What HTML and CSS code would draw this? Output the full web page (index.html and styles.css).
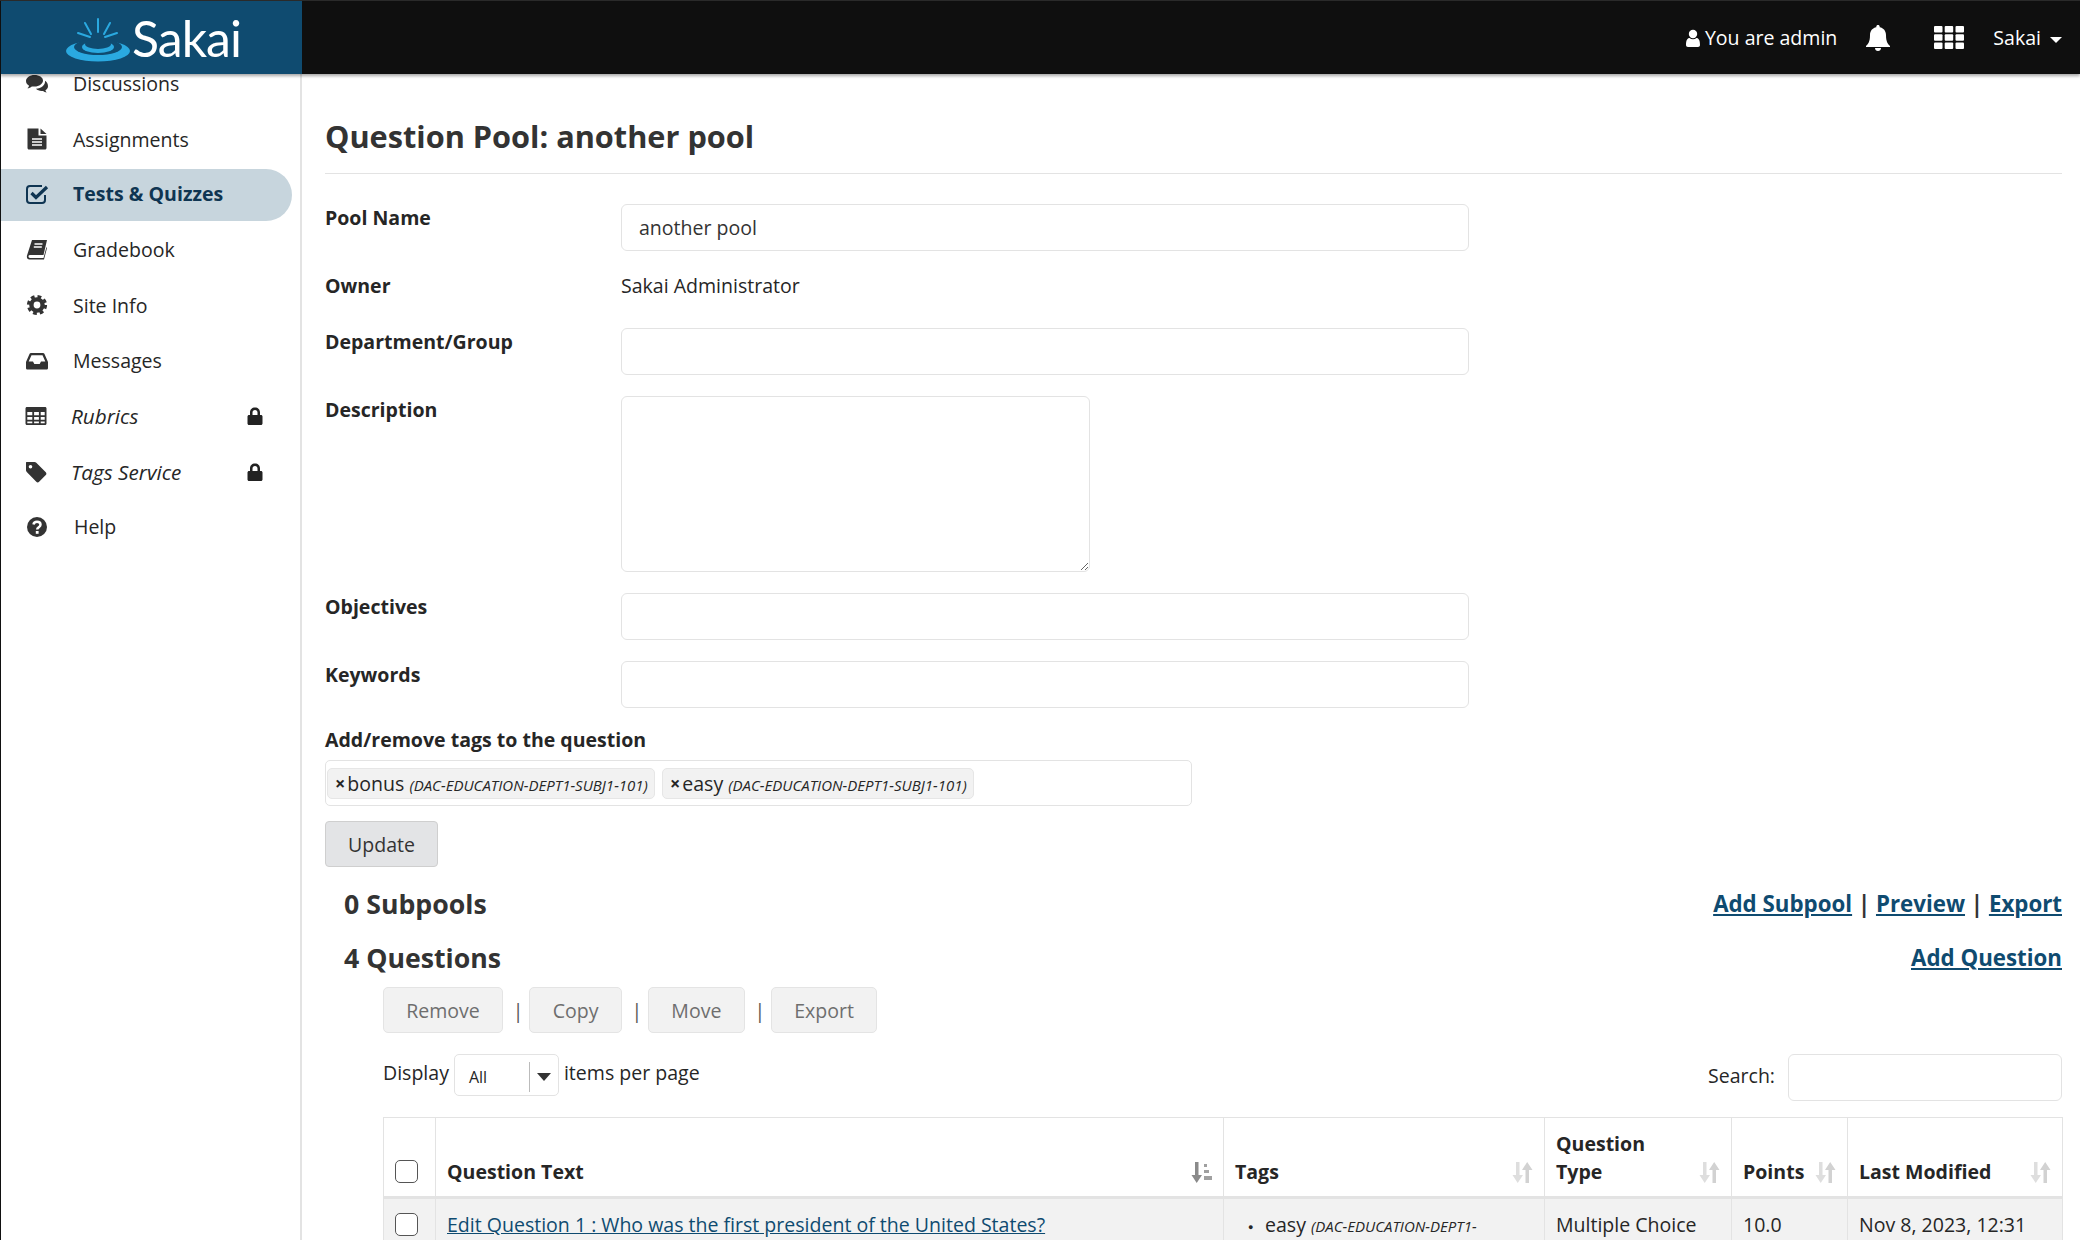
FILE: index.html
```html
<!DOCTYPE html>
<html lang="en">
<head>
  <meta charset="UTF-8" />
  <title>Question Pool: another pool</title>
  <link rel="stylesheet" href="styles.css">
</head>
<body>
  <header class="topbar">
    <a class="logo">
      <svg class="logo-mark" viewBox="0 0 66 44" width="66" height="44">
        <g stroke="#2aa9e0" stroke-width="2" stroke-linecap="round">
          <path d="M32 1v13"/><path d="M19 5l6 11"/><path d="M44 5l-6 11"/><path d="M12 15l12 4"/><path d="M51 15l-12 4"/>
        </g>
        <ellipse cx="32" cy="33" rx="32" ry="10.500" fill="#2aa9e0"/>
        <ellipse cx="32" cy="29" rx="24" ry="8" fill="#0f4b70"/>
        <ellipse cx="32" cy="29" rx="16" ry="6" fill="#2aa9e0"/>
        <ellipse cx="32" cy="26" rx="13" ry="5" fill="#0f4b70"/>
      </svg>
      <span class="logo-text">Sakai</span>
    </a>
    <div class="topbar-right">
      <span class="user">
        <svg viewBox="0 0 14 18" width="14" height="18"><circle cx="7" cy="5" r="4.200" fill="#fff"/><path d="M0 16c0-5 1.500-7 3.500-7 1 .8 2.200 1.200 3.500 1.200S9.500 9.800 10.500 9c2 0 3.500 2 3.500 7 0 1-.8 2-2 2H2c-1.200 0-2-1-2-2z" fill="#fff"/></svg>
        You are admin
      </span>
      <svg class="bell" viewBox="0 0 24 26" width="24" height="26"><path d="M12 0c1 0 1.700.7 1.700 1.700v.6C17.500 3 20 6 20 10c0 7 2 9 4 11v1H0v-1c2-2 4-4 4-11 0-4 2.500-7 6.300-7.700v-.6C10.300.7 11 0 12 0zM9 23h6c0 1.700-1.300 3-3 3s-3-1.300-3-3z" fill="#fff"/></svg>
      <svg class="apps" viewBox="0 0 30 23" width="30" height="23" fill="#fff">
        <rect width="8.500" height="6.500" rx="1"/><rect x="10.700" width="8.500" height="6.500" rx="1"/><rect x="21.500" width="8.500" height="6.500" rx="1"/>
        <rect y="8.200" width="8.500" height="6.500" rx="1"/><rect x="10.700" y="8.200" width="8.500" height="6.500" rx="1"/><rect x="21.500" y="8.200" width="8.500" height="6.500" rx="1"/>
        <rect y="16.500" width="8.500" height="6.500" rx="1"/><rect x="10.700" y="16.500" width="8.500" height="6.500" rx="1"/><rect x="21.500" y="16.500" width="8.500" height="6.500" rx="1"/>
      </svg>
      <span class="site-menu">Sakai <i class="caret"></i></span>
    </div>
  </header>

  <div class="page">
    <nav class="sidebar">
      <ul class="tools">
        <li class="tool">
          <svg viewBox="0 0 24 24"><path d="M9.500 3C4.800 3 1 5.700 1 9c0 1.900 1.200 3.600 3.100 4.700-.3 1-.9 1.900-1.700 2.600 1.700-.2 3.200-.9 4.400-1.900.8.200 1.700.2 2.700.2 4.700 0 8.500-2.700 8.500-6S14.200 3 9.500 3z"/><path d="M20 8.800c.6 4.200-3.700 7.700-9 8 1.300 1.300 3.300 2.200 5.500 2.200.5 0 1 0 1.500-.1 1 .9 2.200 1.500 3.700 1.700-.6-.6-1.100-1.400-1.300-2.300 1.600-1 2.600-2.500 2.600-4.100 0-2.300-1.100-4.200-3-5.400z"/></svg>
          <span>Discussions</span>
        </li>
        <li class="tool">
          <svg viewBox="0 0 24 24"><path d="M2.500 1.500h11v7h8V21c0 .8-.6 1.500-1.500 1.500H4c-.8 0-1.500-.7-1.500-1.500z"/><path d="M15.500 1.500l6 5.500h-6z"/><path d="M7 12h10M7 15h10M7 18h10" stroke="#fff" stroke-width="1.300"/></svg>
          <span>Assignments</span>
        </li>
        <li class="tool tool-active">
          <svg viewBox="0 0 24 24"><path d="M20 13v5c0 1.700-1.300 3-3 3H5c-1.700 0-3-1.300-3-3V7c0-1.700 1.300-3 3-3h12" fill="none" stroke="currentColor" stroke-width="2"/><path d="M6.500 11l4.500 4.500L22 5" fill="none" stroke="currentColor" stroke-width="3.200"/></svg>
          <span>Tests &amp; Quizzes</span>
        </li>
        <li class="tool">
          <svg viewBox="0 0 24 24"><path d="M7 2h15l-3.500 15H5c-1.300 0-1.500 1-1.500 1.500S4 20 5 20h13.500l3-11 .5 1-3 11.500H4.500C2.500 21.500 1.500 20 2 17.500z"/><path d="M9.500 6h8M8.800 9h8" stroke="#fff" stroke-width="1.300"/></svg>
          <span>Gradebook</span>
        </li>
        <li class="tool">
          <svg viewBox="0 0 24 24"><circle cx="12" cy="12" r="5.600" fill="none" stroke="currentColor" stroke-width="4.400"/><circle cx="12" cy="12" r="8.600" fill="none" stroke="currentColor" stroke-width="3" stroke-dasharray="3.800 3"/></svg>
          <span>Site Info</span>
        </li>
        <li class="tool">
          <svg viewBox="0 0 24 24"><path fill-rule="evenodd" d="M6 4h12c.6 0 1.100.3 1.400.8L23 13v6c0 1-.8 1.500-1.500 1.500h-19C1.800 20.500 1 20 1 19v-6l3.600-8.200C4.900 4.300 5.400 4 6 4zm.5 2.200L3.700 12.500H8l1.300 2.500h5.400l1.300-2.500h4.300l-2.800-6.300z"/></svg>
          <span>Messages</span>
        </li>
        <li class="tool tool-locked">
          <svg viewBox="0 0 24 24"><path fill-rule="evenodd" d="M3 3h18c1 0 1.500.7 1.500 1.500v15c0 .8-.5 1.500-1.500 1.500H3c-1 0-1.500-.7-1.500-1.500v-15C1.500 3.700 2 3 3 3zm.3 5v3.200h5V8zm6.800 0v3.200h4.800V8zm6.600 0v3.200h4V8zM3.300 13v2.700h5V13zm6.800 0v2.700h4.800V13zm6.600 0v2.700h4V13zM3.300 17.500v1.700h5v-1.700zm6.800 0v1.700h4.800v-1.700zm6.600 0v1.700h4v-1.700z"/></svg>
          <span>Rubrics</span>
          <svg class="lock" viewBox="0 0 16 18"><path fill-rule="evenodd" d="M3 8V5.500C3 2.500 5 .5 8 .5s5 2 5 5V8h1c.8 0 1.500.6 1.500 1.500v7c0 .8-.7 1.500-1.500 1.500H2c-.8 0-1.500-.7-1.500-1.500v-7C.5 8.600 1.200 8 2 8zm2.500 0h5V5.500C10.500 4 9.500 3 8 3S5.500 4 5.500 5.500z"/></svg>
        </li>
        <li class="tool tool-locked">
          <svg viewBox="0 0 24 24"><path fill-rule="evenodd" d="M2.500 2h8c.7 0 1.300.3 1.800.8l9.500 9.500c.8.800.8 2 0 2.800l-6.700 6.700c-.8.800-2 .8-2.800 0L3 12.300c-.5-.5-1-1.300-1-2V2.500c0-.3.200-.5.500-.5zM6.500 5A1.800 1.800 0 1 0 6.500 8.600 1.800 1.800 0 0 0 6.500 5z"/></svg>
          <span>Tags Service</span>
          <svg class="lock" viewBox="0 0 16 18"><path fill-rule="evenodd" d="M3 8V5.500C3 2.500 5 .5 8 .5s5 2 5 5V8h1c.8 0 1.500.6 1.500 1.500v7c0 .8-.7 1.500-1.500 1.500H2c-.8 0-1.500-.7-1.500-1.500v-7C.5 8.600 1.200 8 2 8zm2.500 0h5V5.500C10.500 4 9.500 3 8 3S5.500 4 5.500 5.500z"/></svg>
        </li>
        <li class="tool tool-help">
          <svg viewBox="0 0 24 24"><circle cx="12" cy="12" r="10"/><path d="M8.500 9.500C8.800 7.700 10.200 6.800 12 6.800c2 0 3.500 1.200 3.500 2.900 0 2.500-3.300 2.600-3.300 4.800" fill="none" stroke="#fff" stroke-width="2.500"/><rect x="10.800" y="16" width="2.800" height="2.800" fill="#fff"/></svg>
          <span>Help</span>
        </li>
      </ul>
    </nav>

    <main class="content">
      <h1 class="page-title">Question Pool: another pool</h1>

      <form class="pool-form">
        <div class="form-row">
          <label>Pool Name</label>
          <input class="field" type="text" value="another pool">
        </div>
        <div class="form-row form-row-static">
          <label>Owner</label>
          <span>Sakai Administrator</span>
        </div>
        <div class="form-row">
          <label>Department/Group</label>
          <input class="field" type="text">
        </div>
        <div class="form-row">
          <label>Description</label>
          <textarea class="field field-area"></textarea>
        </div>
        <div class="form-row">
          <label>Objectives</label>
          <input class="field" type="text">
        </div>
        <div class="form-row">
          <label>Keywords</label>
          <input class="field" type="text">
        </div>
        <div class="tags-label">Add/remove tags to the question</div>
        <div class="tag-box">
          <span class="tag"><b>×</b> bonus <em>(DAC-EDUCATION-DEPT1-SUBJ1-101)</em></span>
          <span class="tag"><b>×</b> easy <em>(DAC-EDUCATION-DEPT1-SUBJ1-101)</em></span>
        </div>
        <button class="btn-update" type="button">Update</button>
      </form>

      <section class="section-head section-subpools">
        <h2>0 Subpools</h2>
        <div class="section-links"><a>Add Subpool</a> | <a>Preview</a> | <a>Export</a></div>
      </section>
      <section class="section-head section-questions">
        <h2>4 Questions</h2>
        <div class="section-links"><a>Add Question</a></div>
      </section>

      <div class="questions">
        <div class="actions">
          <button class="btn-action" type="button">Remove</button><span class="pipe">|</span>
          <button class="btn-action" type="button">Copy</button><span class="pipe">|</span>
          <button class="btn-action" type="button">Move</button><span class="pipe">|</span>
          <button class="btn-action" type="button">Export</button>
        </div>

        <div class="table-tools">
          <div class="per-page">
            <span class="per-page-text">Display</span>
            <div class="select-box"><span class="select-value">All</span><span class="select-arrow"><i class="caret caret-dark"></i></span></div>
            <span class="per-page-text">items per page</span>
          </div>
          <div class="search">
            <label>Search:</label>
            <input class="field search-field" type="text">
          </div>
        </div>

        <table class="question-table">
          <thead>
            <tr>
              <th class="col-check"><input class="check" type="checkbox"></th>
              <th class="col-text"><div class="th-inner"><span>Question Text</span>
                <svg class="sort" viewBox="0 0 21 21" width="21" height="21"><path d="M4 0h3.500v13H11l-5.300 8L.5 13H4z" fill="#8a8a8a"/><path d="M13 2h3v3h-3zM13 8h5v3h-5zM13 14h8v4h-8z" fill="#a0a0a0"/></svg></div></th>
              <th class="col-tags"><div class="th-inner"><span>Tags</span>
                <svg class="sort" viewBox="0 0 21 21" width="21" height="21"><path d="M4 0h3.500v13H11l-5.300 8L.5 13H4z" fill="#dedede"/><path d="M13.500 21H17V8h3.500L15.200 0 10 8h3.500z" fill="#d2d2d2"/></svg></div></th>
              <th class="col-type"><div class="th-inner"><span>Question<br>Type</span>
                <svg class="sort" viewBox="0 0 21 21" width="21" height="21"><path d="M4 0h3.500v13H11l-5.300 8L.5 13H4z" fill="#dedede"/><path d="M13.500 21H17V8h3.500L15.200 0 10 8h3.500z" fill="#d2d2d2"/></svg></div></th>
              <th class="col-points"><div class="th-inner"><span>Points</span>
                <svg class="sort" viewBox="0 0 21 21" width="21" height="21"><path d="M4 0h3.500v13H11l-5.300 8L.5 13H4z" fill="#dedede"/><path d="M13.500 21H17V8h3.500L15.200 0 10 8h3.500z" fill="#d2d2d2"/></svg></div></th>
              <th class="col-date"><div class="th-inner"><span>Last Modified</span>
                <svg class="sort" viewBox="0 0 21 21" width="21" height="21"><path d="M4 0h3.500v13H11l-5.300 8L.5 13H4z" fill="#dedede"/><path d="M13.500 21H17V8h3.500L15.200 0 10 8h3.500z" fill="#d2d2d2"/></svg></div></th>
            </tr>
          </thead>
          <tbody>
            <tr>
              <td class="col-check"><input class="check" type="checkbox"></td>
              <td><a class="question-link">Edit Question 1 : Who was the first president of the United States?</a></td>
              <td><ul class="cell-tags"><li>easy <em>(DAC-EDUCATION-DEPT1-SUBJ1-101)</em></li></ul></td>
              <td>Multiple Choice</td>
              <td>10.0</td>
              <td>Nov 8, 2023, 12:31 PM</td>
            </tr>
          </tbody>
        </table>
      </div>
    </main>
  </div>
</body>
</html>
```
FILE: styles.css
```css
* {
  box-sizing: border-box;
}
html, body {
  height: 100%;
  margin: 0;
  overflow: hidden;
}
body {
  font-family: "Open Sans", sans-serif;
  font-size: 19.55px;
  color: #262626;
  background: #fff;
  display: flex;
  flex-direction: column;
}

/* top bar */
.topbar {
  height: 74px;
  flex: none;
  display: flex;
  justify-content: space-between;
  background: #0f0f0f;
  border-top: 1px solid #2a2a2a;
  box-shadow: 0 2px 3px rgba(0, 0, 0, 0.35);
  position: relative;
  z-index: 2;
  color: #fff;
}
.logo {
  width: 301px;
  margin-left: 1px;
  background: #0f4b70;
  display: flex;
  align-items: center;
  padding-left: 65px;
}
.logo-mark {
  margin-top: 4px;
}
.logo-text {
  font-family: Lato, sans-serif;
  font-weight: 400;
  font-size: 50px;
  letter-spacing: -1px;
  line-height: 1;
}
.topbar-right {
  display: flex;
  align-items: center;
  padding-right: 18px;
}
.user {
  display: flex;
  align-items: center;
  gap: 5px;
}
.bell {
  margin-left: 29px;
}
.apps {
  margin-left: 44px;
}
.site-menu {
  margin-left: 29px;
}
.caret {
  display: inline-block;
  width: 0;
  height: 0;
  margin-left: 4px;
  vertical-align: middle;
  border-left: 6px solid transparent;
  border-right: 6px solid transparent;
  border-top: 6px solid #fff;
}
.caret-dark {
  margin: 0;
  border-top-color: #333;
  border-left-width: 7px;
  border-right-width: 7px;
  border-top-width: 8px;
}

/* sidebar */
.page {
  flex: 1;
  min-height: 0;
  display: flex;
  border-left: 1px solid #111;
}
.sidebar {
  width: 301px;
  flex: none;
  border-right: 2px solid #e3e3e3;
  overflow: hidden;
}
.tools {
  list-style: none;
  margin: -18px 0 0;
  padding: 0;
}
.tool {
  height: 55.4px;
  width: 291px;
  display: flex;
  align-items: center;
  padding-left: 24px;
  gap: 24px;
  padding-right: 29px;
}
.tool svg {
  width: 24px;
  height: 24px;
  flex: none;
  fill: currentColor;
  color: #333;
}
.tool-active {
  height: 52px;
  margin: 2px 0 1.5px;
  padding-bottom: 2px;
  background: #c7d5dd;
  border-radius: 0 26px 26px 0;
  font-weight: 700;
  color: #0f3552;
}
.tool-active svg {
  color: #0f3552;
}
.tool-locked {
  font-style: italic;
  font-size: 20.7px;
  padding-left: 23px;
  gap: 23px;
}
.tool-help {
  gap: 25px;
}
.tool .lock {
  width: 16px;
  height: 18px;
  margin-left: auto;
  color: #222;
}

/* main column */
.content {
  flex: 1;
  min-width: 0;
  padding: 41px 18px 0 23px;
}
.page-title {
  font-size: 30.7px;
  font-weight: 700;
  line-height: 42px;
  margin: 0;
  padding-bottom: 16px;
  border-bottom: 1px solid #e3e3e3;
  color: #333;
}
.pool-form {
  padding-top: 30px;
}
.form-row {
  display: flex;
  align-items: flex-start;
  margin-bottom: 21px;
}
.form-row label {
  width: 296px;
  flex: none;
  font-weight: 700;
  line-height: 27px;
}
.form-row-static {
  height: 35px;
  line-height: 27px;
}
.field {
  display: block;
  width: 848px;
  height: 47px;
  padding: 0 17px;
  border: 1px solid #e3e3e3;
  border-radius: 6px;
  background: #fff;
  font: inherit;
  color: #333;
  outline: none;
}
.field-area {
  width: 469px;
  height: 176px;
}
.tags-label {
  font-weight: 700;
  line-height: 26px;
  margin-top: -2px;
}
.tag-box {
  width: 867px;
  height: 46px;
  margin-top: 7px;
  display: flex;
  align-items: center;
  gap: 7px;
  padding-left: 1px;
  border: 1px solid #e3e3e3;
  border-radius: 5px;
}
.tag {
  height: 31px;
  display: flex;
  align-items: center;
  padding: 0 6px 0 7px;
  background: #f2f2f2;
  border: 1px solid #e6e6e6;
  border-radius: 5px;
  white-space: pre;
}
.tag b {
  font-size: 18px;
  margin-right: -3px;
}
.tag em {
  padding-top: 3px;
}
.tag em, .cell-tags em {
  font-size: 15px;
}
.btn-update {
  display: block;
  width: 113px;
  height: 46px;
  margin-top: 15px;
  background: #e3e4e6;
  border: 1px solid #cfcfcf;
  border-radius: 4px;
  font: inherit;
  color: #333;
}

/* subpools and questions */
.section-head {
  display: flex;
  justify-content: space-between;
  align-items: center;
  padding-left: 19px;
  height: 54px;
}
.section-subpools {
  margin-top: 10px;
}
.section-head h2 {
  margin: -2px 0 0;
  font-size: 26.7px;
  font-weight: 700;
  color: #333;
}
.section-links {
  font-size: 22.3px;
  font-weight: 700;
  color: #333;
  margin-top: -2px;
}
.section-links a {
  color: #0f4b70;
  text-decoration: underline;
}
.questions {
  padding-left: 58px;
  margin-top: 2px;
}
.actions {
  display: flex;
  align-items: center;
}
.btn-action {
  height: 46px;
  padding: 0 22.2px;
  background: #f2f2f2;
  border: 1px solid #e4e4e4;
  border-radius: 5px;
  font: inherit;
  color: #6e6e6e;
}
.pipe {
  width: 26.5px;
  padding-left: 4px;
  text-align: center;
  color: #555;
}
.table-tools {
  display: flex;
  justify-content: space-between;
  align-items: flex-start;
  margin-top: 21px;
}
.per-page {
  display: flex;
  align-items: center;
  gap: 5px;
  height: 42px;
}
.per-page-text {
  padding-bottom: 5px;
}
.select-box {
  width: 105px;
  height: 42px;
  display: flex;
  align-items: center;
  border: 1px solid #e3e3e3;
  border-radius: 5px;
  font-size: 16px;
  padding-top: 3px;
}
.select-value {
  width: 74px;
  padding-left: 14px;
}
.select-arrow {
  height: 30px;
  flex: 1;
  display: flex;
  align-items: center;
  justify-content: center;
  border-left: 1px solid #bbb;
}
.search {
  display: flex;
  align-items: center;
  gap: 13px;
}
.search label {
  padding-bottom: 5px;
}
.search-field {
  width: 274px;
  height: 47px;
}
.question-table {
  width: 1679px;
  table-layout: fixed;
  border-collapse: collapse;
  margin-top: 16px;
}
.question-table th, .question-table td {
  border: 1px solid #e3e3e3;
  padding: 9px 11px 8px;
  vertical-align: top;
  text-align: left;
}
.question-table th {
  height: 80px;
  vertical-align: bottom;
  border-bottom: 3px solid #e3e3e3;
  font-weight: 700;
  line-height: 28px;
}
.question-table td {
  background: #f2f2f2;
  line-height: 34px;
}
.th-inner {
  display: flex;
  justify-content: space-between;
  align-items: flex-end;
  padding-bottom: 2px;
}
.sort {
  margin: 0 0 3px 0;
  flex: none;
}
.col-check { width: 52px; }
.col-text { width: 788px; }
.col-tags { width: 321px; }
.col-type { width: 187px; }
.col-points { width: 116px; }
.col-date { width: 215px; }
.question-table .col-check {
  padding: 0 0 0 11px;
  vertical-align: bottom;
}
.question-table td.col-check {
  vertical-align: top;
  padding-top: 14px;
}
.check {
  appearance: none;
  display: block;
  width: 23px;
  height: 23px;
  margin: 0 0 13px;
  border: 1.500px solid #555;
  border-radius: 5px;
  background: #fff;
}
.question-link {
  color: #0f4b70;
  text-decoration: underline;
}
.cell-tags {
  list-style: none;
  margin: 0;
  padding: 0 30px 0 13px;
}
.cell-tags li::before {
  content: "\25CF";
  display: inline-block;
  width: 17px;
  font-size: 9px;
  vertical-align: 2px;
}
```
